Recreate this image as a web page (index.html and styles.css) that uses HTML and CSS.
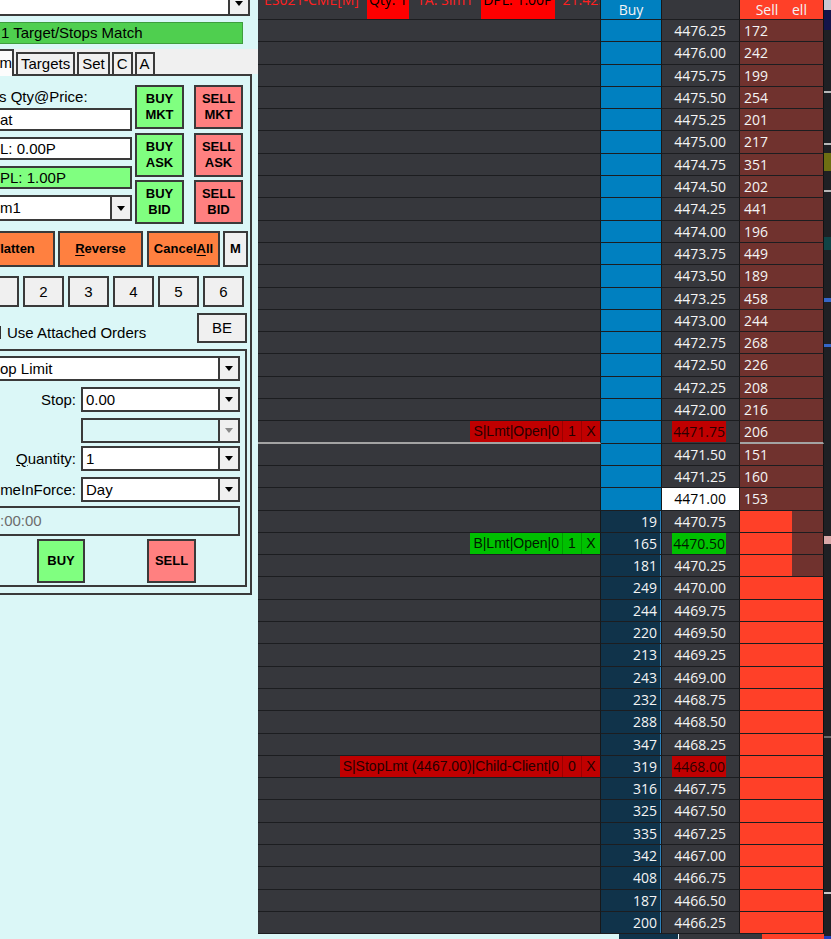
FILE: index.html
```html
<!DOCTYPE html>
<html lang="en">
<head>
    <meta charset="UTF-8">
    <title>DOM - ES</title>
    <link rel="stylesheet" href="styles.css">
</head>
<body>
<div class="screen">
    <!-- order entry panel -->
    <aside class="side">
        <div class="dock">
            <div class="combo combo-top"><span class="combo-text"></span><span class="drop"></span></div>
            <div class="match">1 Target/Stops Match</div>

            <div class="tabs">
                <span class="tab tab-on">m</span>
                <span class="tab">Targets</span>
                <span class="tab">Set</span>
                <span class="tab">C</span>
                <span class="tab">A</span>
            </div>

            <div class="page">
                <div class="quick">
                    <div class="pos">
                        <div class="pos-label">s Qty@Price:</div>
                        <div class="field">at</div>
                        <div class="field">L: 0.00P</div>
                        <div class="field field-ok">PL: 1.00P</div>
                        <div class="combo combo-acct"><span class="combo-text">m1</span><span class="drop"></span></div>
                    </div>
                    <div class="quick-btns">
                        <button class="btn btn-buy">BUY<br>MKT</button>
                        <button class="btn btn-sell">SELL<br>MKT</button>
                        <button class="btn btn-buy">BUY<br>ASK</button>
                        <button class="btn btn-sell">SELL<br>ASK</button>
                        <button class="btn btn-buy">BUY<br>BID</button>
                        <button class="btn btn-sell">SELL<br>BID</button>
                    </div>
                </div>

                <div class="actions">
                    <button class="btn btn-act btn-flat">Flatten</button>
                    <button class="btn btn-act btn-rev"><u>R</u>everse</button>
                    <button class="btn btn-act btn-cxl">Cancel<u>A</u>ll</button>
                    <button class="btn btn-m">M</button>
                </div>

                <div class="qty-row">
                    <button class="btn btn-num">1</button>
                    <button class="btn btn-num">2</button>
                    <button class="btn btn-num">3</button>
                    <button class="btn btn-num">4</button>
                    <button class="btn btn-num">5</button>
                    <button class="btn btn-num">6</button>
                </div>

                <div class="check-row">
                    <span class="checkbox"></span>
                    <span class="check-label">Use Attached Orders</span>
                    <button class="btn btn-be">BE</button>
                </div>

                <div class="group">
                    <div class="combo combo-wide"><span class="combo-text">op Limit</span><span class="drop"></span></div>
                    <div class="frow">
                        <span class="flabel">Stop:</span>
                        <div class="combo"><span class="combo-text">0.00</span><span class="drop"></span></div>
                    </div>
                    <div class="frow">
                        <span class="flabel"></span>
                        <div class="combo combo-off"><span class="combo-text"></span><span class="drop"></span></div>
                    </div>
                    <div class="frow frow-tight">
                        <span class="flabel"><u>Q</u>uantity:</span>
                        <div class="combo"><span class="combo-text">1</span><span class="drop"></span></div>
                    </div>
                    <div class="frow">
                        <span class="flabel">imeInForce:</span>
                        <div class="combo"><span class="combo-text">Day</span><span class="drop"></span></div>
                    </div>
                    <div class="time">:00:00</div>
                    <div class="send">
                        <button class="btn btn-buy btn-send">BUY</button>
                        <button class="btn btn-sell btn-send btn-send-sell">SELL</button>
                    </div>
                </div>
            </div>
        </div>
    </aside>

    <!-- price ladder -->
    <main class="ladder">
        <div class="book">
            <div class="row hd">
                <div class="ord">
                    <div class="feed"><span>ES021-CME[M]</span><b>Qty: 1</b><span>TA: Sim1</span><b>DPL: 1.00P</b><span>21:42:15</span></div>
                </div>
                <div class="bid">Buy</div>
                <div class="px"></div>
                <div class="ask">Sell</div>
                <div class="ghost">ell</div>
            </div>

            <div class="row"><div class="ord"></div><div class="bid"></div><div class="px">4476.25</div><div class="ask">172</div><div class="ghost"></div></div>
            <div class="row"><div class="ord"></div><div class="bid"></div><div class="px">4476.00</div><div class="ask">242</div><div class="ghost"></div></div>
            <div class="row"><div class="ord"></div><div class="bid"></div><div class="px">4475.75</div><div class="ask">199</div><div class="ghost"></div></div>
            <div class="row"><div class="ord"></div><div class="bid"></div><div class="px">4475.50</div><div class="ask">254</div><div class="ghost"></div></div>
            <div class="row"><div class="ord"></div><div class="bid"></div><div class="px">4475.25</div><div class="ask">201</div><div class="ghost"></div></div>
            <div class="row"><div class="ord"></div><div class="bid"></div><div class="px">4475.00</div><div class="ask">217</div><div class="ghost"></div></div>
            <div class="row"><div class="ord"></div><div class="bid"></div><div class="px">4474.75</div><div class="ask">351</div><div class="ghost"></div></div>
            <div class="row"><div class="ord"></div><div class="bid"></div><div class="px">4474.50</div><div class="ask">202</div><div class="ghost"></div></div>
            <div class="row"><div class="ord"></div><div class="bid"></div><div class="px">4474.25</div><div class="ask">441</div><div class="ghost"></div></div>
            <div class="row"><div class="ord"></div><div class="bid"></div><div class="px">4474.00</div><div class="ask">196</div><div class="ghost"></div></div>
            <div class="row"><div class="ord"></div><div class="bid"></div><div class="px">4473.75</div><div class="ask">449</div><div class="ghost"></div></div>
            <div class="row"><div class="ord"></div><div class="bid"></div><div class="px">4473.50</div><div class="ask">189</div><div class="ghost"></div></div>
            <div class="row"><div class="ord"></div><div class="bid"></div><div class="px">4473.25</div><div class="ask">458</div><div class="ghost"></div></div>
            <div class="row"><div class="ord"></div><div class="bid"></div><div class="px">4473.00</div><div class="ask">244</div><div class="ghost"></div></div>
            <div class="row"><div class="ord"></div><div class="bid"></div><div class="px">4472.75</div><div class="ask">268</div><div class="ghost"></div></div>
            <div class="row"><div class="ord"></div><div class="bid"></div><div class="px">4472.50</div><div class="ask">226</div><div class="ghost"></div></div>
            <div class="row"><div class="ord"></div><div class="bid"></div><div class="px">4472.25</div><div class="ask">208</div><div class="ghost"></div></div>
            <div class="row"><div class="ord"></div><div class="bid"></div><div class="px">4472.00</div><div class="ask">216</div><div class="ghost"></div></div>
            <div class="row">
                <div class="ord lt"><div class="tag"><span>S|Lmt|Open|0</span><span class="tag-n">1</span><span class="tag-n">X</span></div></div>
                <div class="bid"></div><div class="px"><span class="hl">4471.75</span></div><div class="ask lt">206</div><div class="ghost lt"></div>
            </div>
            <div class="row"><div class="ord"></div><div class="bid"></div><div class="px">4471.50</div><div class="ask">151</div><div class="ghost"></div></div>
            <div class="row"><div class="ord"></div><div class="bid"></div><div class="px">4471.25</div><div class="ask">160</div><div class="ghost"></div></div>
            <div class="row"><div class="ord"></div><div class="bid"></div><div class="px px-last">4471.00</div><div class="ask">153</div><div class="ghost"></div></div>

            <div class="row"><div class="ord"></div><div class="bid fill">19</div><div class="px">4470.75</div><div class="ask hot"></div><div class="ghost"></div></div>
            <div class="row">
                <div class="ord"><div class="tag tag-buy"><span>B|Lmt|Open|0</span><span class="tag-n">1</span><span class="tag-n">X</span></div></div>
                <div class="bid fill">165</div><div class="px"><span class="hl hl-buy">4470.50</span></div><div class="ask hot"></div><div class="ghost"></div>
            </div>
            <div class="row"><div class="ord"></div><div class="bid fill">181</div><div class="px">4470.25</div><div class="ask hot"></div><div class="ghost"></div></div>
            <div class="row"><div class="ord"></div><div class="bid fill">249</div><div class="px">4470.00</div><div class="ask hot"></div><div class="ghost hot"></div></div>
            <div class="row"><div class="ord"></div><div class="bid fill">244</div><div class="px">4469.75</div><div class="ask hot"></div><div class="ghost hot"></div></div>
            <div class="row"><div class="ord"></div><div class="bid fill">220</div><div class="px">4469.50</div><div class="ask hot"></div><div class="ghost hot"></div></div>
            <div class="row"><div class="ord"></div><div class="bid fill">213</div><div class="px">4469.25</div><div class="ask hot"></div><div class="ghost hot"></div></div>
            <div class="row"><div class="ord"></div><div class="bid fill">243</div><div class="px">4469.00</div><div class="ask hot"></div><div class="ghost hot"></div></div>
            <div class="row"><div class="ord"></div><div class="bid fill">232</div><div class="px">4468.75</div><div class="ask hot"></div><div class="ghost hot"></div></div>
            <div class="row"><div class="ord"></div><div class="bid fill">288</div><div class="px">4468.50</div><div class="ask hot"></div><div class="ghost hot"></div></div>
            <div class="row"><div class="ord"></div><div class="bid fill">347</div><div class="px">4468.25</div><div class="ask hot"></div><div class="ghost hot"></div></div>
            <div class="row">
                <div class="ord"><div class="tag"><span>S|StopLmt (4467.00)|Child-Client|0</span><span class="tag-n">0</span><span class="tag-n">X</span></div></div>
                <div class="bid fill">319</div><div class="px"><span class="hl">4468.00</span></div><div class="ask hot"></div><div class="ghost hot"></div>
            </div>
            <div class="row"><div class="ord"></div><div class="bid fill">316</div><div class="px">4467.75</div><div class="ask hot"></div><div class="ghost hot"></div></div>
            <div class="row"><div class="ord"></div><div class="bid fill">325</div><div class="px">4467.50</div><div class="ask hot"></div><div class="ghost hot"></div></div>
            <div class="row"><div class="ord"></div><div class="bid fill">335</div><div class="px">4467.25</div><div class="ask hot"></div><div class="ghost hot"></div></div>
            <div class="row"><div class="ord"></div><div class="bid fill">342</div><div class="px">4467.00</div><div class="ask hot"></div><div class="ghost hot"></div></div>
            <div class="row"><div class="ord"></div><div class="bid fill">408</div><div class="px">4466.75</div><div class="ask hot"></div><div class="ghost hot"></div></div>
            <div class="row"><div class="ord"></div><div class="bid fill">187</div><div class="px">4466.50</div><div class="ask hot"></div><div class="ghost hot"></div></div>
            <div class="row"><div class="ord"></div><div class="bid fill">200</div><div class="px">4466.25</div><div class="ask hot"></div><div class="ghost hot"></div></div>

            <div class="tail">
                <span class="tail-bg"></span>
                <span class="tail-bid"></span>
                <span class="tail-px"></span>
                <span class="tail-ask"></span>
            </div>
        </div>
        <div class="edge"></div>
    </main>
</div>
</body>
</html>
```

FILE: styles.css
```css
* {
    box-sizing: border-box;
}

body {
    margin: 0;
    width: 831px;
    height: 939px;
    overflow: hidden;
    background-color: #dbf7f7;
    font-family: 'Liberation Sans', Arial, sans-serif;
    font-size: 15px;
    color: #000;
}

.screen {
    display: flex;
    height: 939px;
}

/* ---------- order entry panel ---------- */

.side {
    flex: none;
    width: 258px;
    overflow: hidden;
    background-color: #dbf7f7;
}

.dock {
    margin-left: -40px;
    width: 298px;
}

.combo {
    display: flex;
    height: 25px;
    background-color: #fff;
    border: 2px solid #3a3a3a;
}

.combo-text {
    flex: 1;
    padding-left: 3px;
    line-height: 21px;
    white-space: nowrap;
    overflow: hidden;
}

.drop {
    width: 20px;
    background-color: #f0f0f0;
    border-left: 2px solid #3a3a3a;
    display: flex;
    align-items: center;
    justify-content: center;
}

.drop::after {
    content: "";
    border-left: 4px solid transparent;
    border-right: 4px solid transparent;
    border-top: 5px solid #000;
}

.combo-top {
    width: 290px;
    margin-top: -9px;
}

.match {
    width: 283px;
    height: 22px;
    margin-top: 6px;
    padding-left: 40px;
    line-height: 20px;
    background-color: #4fcf4f;
    border: 1px solid #3d9e3d;
}

.tabs {
    display: flex;
    align-items: flex-end;
    height: 25px;
    margin-top: 5px;
    background-color: #f0f0f0;
}

.tab {
    height: 22px;
    margin-left: 2px;
    padding: 0 3px;
    line-height: 20px;
    background-color: #f0f0f0;
    border: 2px solid #3a3a3a;
    border-bottom: none;
}

.tab-on {
    position: relative;
    z-index: 1;
    width: 54px;
    height: 27px;
    margin-left: 0;
    margin-bottom: -2px;
    padding: 2px 0 0;
    text-align: right;
    background-color: #fcfcfc;
}

.page {
    width: 292px;
    padding: 9px 0 6px;
    border: 2px solid #3a3a3a;
}

.quick {
    display: flex;
}

.pos {
    width: 170px;
}

.pos-label {
    height: 23px;
    line-height: 23px;
    padding-left: 37px;
    white-space: nowrap;
}

.field {
    height: 23px;
    margin-top: 6px;
    padding-left: 36px;
    line-height: 19px;
    background-color: #fff;
    border: 2px solid #3a3a3a;
    white-space: nowrap;
}

.pos-label + .field {
    margin-top: 0;
}

.field-ok {
    background-color: #80ff80;
}

.combo-acct {
    height: 26px;
    margin-top: 6px;
}

.combo-acct .combo-text {
    padding-left: 36px;
    line-height: 22px;
}

.quick-btns {
    display: grid;
    grid-template-columns: 49px 49px;
    grid-auto-rows: 44px;
    column-gap: 10px;
    row-gap: 3.5px;
    margin-left: 3px;
}

.btn {
    padding: 0;
    margin: 0;
    border: 2px solid #3a3a3a;
    border-radius: 0;
    font-family: 'Liberation Sans', Arial, sans-serif;
    font-size: 13px;
    font-weight: bold;
    line-height: 16px;
    color: #000;
    background-color: #f0f0f0;
}

.btn u {
    text-underline-offset: 2px;
}

.btn-buy {
    background-color: #80ff80;
}

.btn-sell {
    background-color: #ff8080;
}

.actions {
    display: flex;
    height: 36px;
    margin-top: 7px;
}

.btn-act {
    background-color: #ff8040;
}

.btn-flat {
    width: 83px;
    margin-left: 10px;
}

.btn-rev {
    width: 85px;
    margin-left: 3px;
}

.btn-cxl {
    width: 73px;
    margin-left: 4px;
}

.btn-m {
    width: 25px;
    margin-left: 3px;
}

.qty-row {
    display: flex;
    gap: 4px;
    height: 31px;
    margin-top: 9px;
    margin-left: 2px;
}

.btn-num {
    width: 41px;
    font-size: 15px;
    font-weight: normal;
}

/* the first key runs off the left edge of the window */
.btn-num:first-child {
    width: 55px;
}

.check-row {
    display: flex;
    align-items: center;
    height: 30px;
    margin-top: 6px;
}

.checkbox {
    width: 13px;
    height: 13px;
    margin: 8px 0 0 26px;
    background-color: #fff;
    border: 1px solid #333;
}

.check-label {
    margin-left: 6px;
    padding-top: 8px;
}

.btn-be {
    width: 50px;
    height: 30px;
    margin-left: auto;
    margin-right: 3px;
    font-size: 15px;
    font-weight: normal;
}

.group {
    margin: 6px 3px 0 0;
    padding: 5px 5px 2px 0;
    border: 2px solid #3a3a3a;
}

.combo-wide .combo-text {
    padding-left: 34px;
}

.frow {
    display: flex;
    align-items: center;
    margin-top: 6px;
}

.frow-tight {
    margin-top: 3px;
}

.flabel {
    width: 112px;
    text-align: right;
    white-space: nowrap;
    overflow: hidden;
}

.frow .combo {
    flex: 1;
    margin-left: 5px;
}

.combo-off {
    background-color: transparent;
}

.combo-off .drop::after {
    border-top-color: #8a8a8a;
}

.time {
    height: 30px;
    margin-top: 4px;
    padding-left: 34px;
    line-height: 26px;
    color: #6d6d6d;
    border: 2px solid #3a3a3a;
}

.send {
    display: flex;
    margin-top: 3px;
}

.btn-send {
    width: 48px;
    height: 44px;
    margin-left: 73px;
}

.btn-send-sell {
    width: 49px;
    margin-left: 62px;
}

/* ---------- price ladder ---------- */

.ladder {
    flex: 1;
    display: flex;
    background-color: #1f2024;
}

.book {
    width: 566px;
    display: flex;
    flex-direction: column;
    font-family: 'Open Sans', 'Noto Sans', sans-serif;
    font-size: 14px;
    color: #f4f4f4;
}

.row {
    display: grid;
    grid-template-columns: 343px 61px 78px 52px 32px;
    height: 22.3px;
    flex: none;
}

.row > div {
    line-height: 21px;
    white-space: nowrap;
    overflow: hidden;
    border-bottom: 1px solid #1c1d20;
}

.row.hd {
    height: 20px;
}

.row.hd > div {
    line-height: 19px;
}

.ord {
    display: flex;
    justify-content: flex-end;
    background-color: #36373c;
    border-right: 1px solid #17181a;
}

.bid {
    padding-right: 4px;
    text-align: right;
    background-color: #0080c0;
    border-right: 1px solid #17181a;
}

.bid.fill {
    background-color: #10334a;
    box-shadow: inset -1px 0 #2d80b8;
}

.px {
    padding-right: 13px;
    text-align: right;
    background-color: #36373c;
    border-right: 1px solid #17181a;
}

.px-last {
    background-color: #fff;
    color: #000;
}

.hl {
    display: inline-block;
    height: 21px;
    padding: 0 1px;
    background-color: #c00000;
    color: #2c0000;
}

.hl-buy {
    background-color: #00c000;
    color: #001a00;
}

.ask {
    padding-left: 4px;
    background-color: #70322e;
}

.ghost {
    background-color: #70322e;
    border-right: 1px solid #111;
}

.ask.hot,
.ghost.hot {
    background-color: #ff4028;
}

.row > .lt {
    border-bottom: 2px solid #a3a3a3;
}

/* header strip */
.hd .ord {
    justify-content: flex-start;
}

.hd .bid {
    padding-right: 0;
    text-align: center;
}

.hd .ask {
    padding-left: 2px;
    text-align: center;
    background-color: #ff4028;
}

.hd .ghost {
    background-color: #ff4028;
}

.feed {
    display: flex;
    gap: 8px;
    margin-top: -9px;
    padding-left: 6px;
    font-size: 14px;
    line-height: 18px;
    color: #ff2020;
}

.feed b {
    padding: 0 2px;
    font-weight: normal;
    background-color: #ff0000;
    color: #000;
}

/* order tags sitting on the price row */
.tag {
    display: flex;
    height: 100%;
    font-family: 'Liberation Sans', Arial, sans-serif;
    background-color: #c00000;
    color: #260000;
}

.tag span {
    padding: 0 3px;
}

.tag .tag-n {
    width: 19px;
    padding: 0;
    text-align: center;
    border-left: 1px solid #9a0000;
}

.tag-buy {
    background-color: #00c000;
    color: #001a00;
}

.tag-buy .tag-n {
    border-left-color: #009a00;
}

.tail {
    flex: 1;
    display: flex;
}

.tail-bg {
    width: 361px;
    background-color: #dbf7f7;
}

.tail-bid {
    width: 60px;
    background-color: #10334a;
    border-right: 1px solid #e8f4f8;
}

.tail-px {
    width: 83px;
    background-color: #36373c;
}

.tail-ask {
    flex: 1;
    background-color: #ff4028;
}

/* edge of the next window peeking in */
.edge {
    flex: 1;
    background: linear-gradient(#c9c9d2 0 10px, #14144a 10px 30px, #1f2024 30px 91px,
        #b8b8b8 91px 93px, #1f2024 93px 143px, #b8b8b8 143px 145px, #1f2024 145px 153px,
        #6e6e12 153px 171px, #1f2024 171px 190px, #b8b8b8 190px 192px, #1f2024 192px 237px,
        #0f4446 237px 250px, #1f2024 250px 298px, #3566c8 298px 302px, #1f2024 302px 344px,
        #3566c8 344px 347px, #1f2024 347px 536px, #d9a8a8 536px 544px, #1f2024 544px 736px,
        #6a6a6a 736px 738px, #1f2024 738px 892px, #c8c8c8 892px 894px, #1f2024 894px 936px,
        #2040c0 936px);
}
```
